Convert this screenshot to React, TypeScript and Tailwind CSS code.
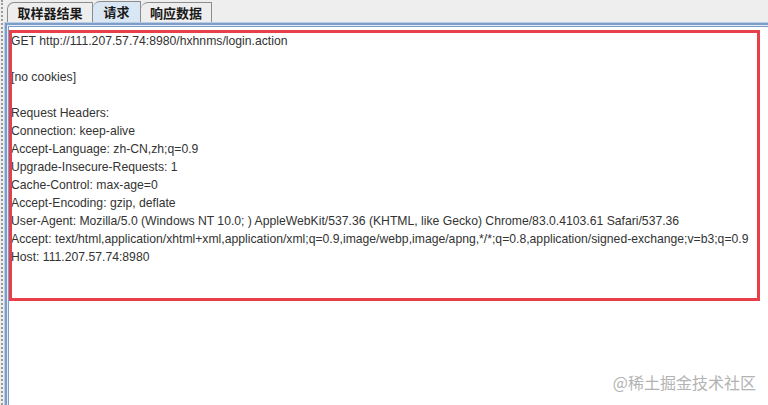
export default function App() {
  const lines = [
    'GET http://111.207.57.74:8980/hxhnms/login.action',
    '',
    '[no cookies]',
    '',
    'Request Headers:',
    'Connection: keep-alive',
    'Accept-Language: zh-CN,zh;q=0.9',
    'Upgrade-Insecure-Requests: 1',
    'Cache-Control: max-age=0',
    'Accept-Encoding: gzip, deflate',
    'User-Agent: Mozilla/5.0 (Windows NT 10.0; ) AppleWebKit/537.36 (KHTML, like Gecko) Chrome/83.0.4103.61 Safari/537.36',
    'Accept: text/html,application/xhtml+xml,application/xml;q=0.9,image/webp,image/apng,*/*;q=0.8,application/signed-exchange;v=b3;q=0.9',
    'Host: 111.207.57.74:8980',
  ]

  return (
    <div className="w-[768px] h-[405px] bg-[#eeeeee] flex overflow-hidden font-['Liberation_Sans',Arial,sans-serif]">
      {/* dotted gutter */}
      <div className="w-[4px] shrink-0 pl-[1px]">
        <div className="h-full border-l-[2px] border-dotted border-[#9a9a9a]" />
      </div>

      <div className="flex-1 flex flex-col">
        {/* tabs */}
        <div className="h-[22px] flex items-end pl-[3px] font-['Noto_Sans_CJK_SC',sans-serif] font-bold text-[13px] text-[#1a1a1a]">
          <div className="h-[20px] w-[86px] flex items-center justify-center border border-b-0 border-[#8c8c8c] rounded-tl-[7px] bg-[#eeeeee]">
            取样器结果
          </div>
          <div className="h-[21px] w-[48px] flex items-center justify-center border border-b-0 border-l-0 border-[#8c8c8c] rounded-tl-[7px] bg-[#d9e6f4]">
            请求
          </div>
          <div className="h-[20px] w-[71px] flex items-center justify-center border border-b-0 border-l-0 border-[#8c8c8c] rounded-tl-[7px] bg-[#eeeeee]">
            响应数据
          </div>
        </div>

        {/* panel frame */}
        <div className="flex-1 flex flex-col border-t border-l border-[#b9cde4]">
          <div className="flex-1 flex flex-col border-t-2 border-l-2 border-[#7d9dc9]">
            <div className="flex-1 flex flex-col border-t border-l border-[#e3ecf6]">
              <div className="flex-1 flex flex-col border-t border-l border-[#7d9dc9]">
                <div className="relative flex-1 bg-white pt-[5px] pl-[2px] text-[12.2px] leading-[18px] text-[#333333] whitespace-nowrap">
                  {lines.map((l, i) => (
                    <div key={i} className="h-[18px]">{l}</div>
                  ))}

                  {/* annotation box */}
                  <div className="absolute left-0 top-[3px] w-[751px] h-[271px] border-[3px] border-[#e8404a]" />

                  <div className="absolute right-[12px] bottom-[13px] text-[16px] leading-[20px] text-[#b3b3b3] font-['Noto_Sans_CJK_SC',sans-serif]">
                    @稀土掘金技术社区
                  </div>
                </div>
              </div>
            </div>
          </div>
        </div>
      </div>
    </div>
  )
}
